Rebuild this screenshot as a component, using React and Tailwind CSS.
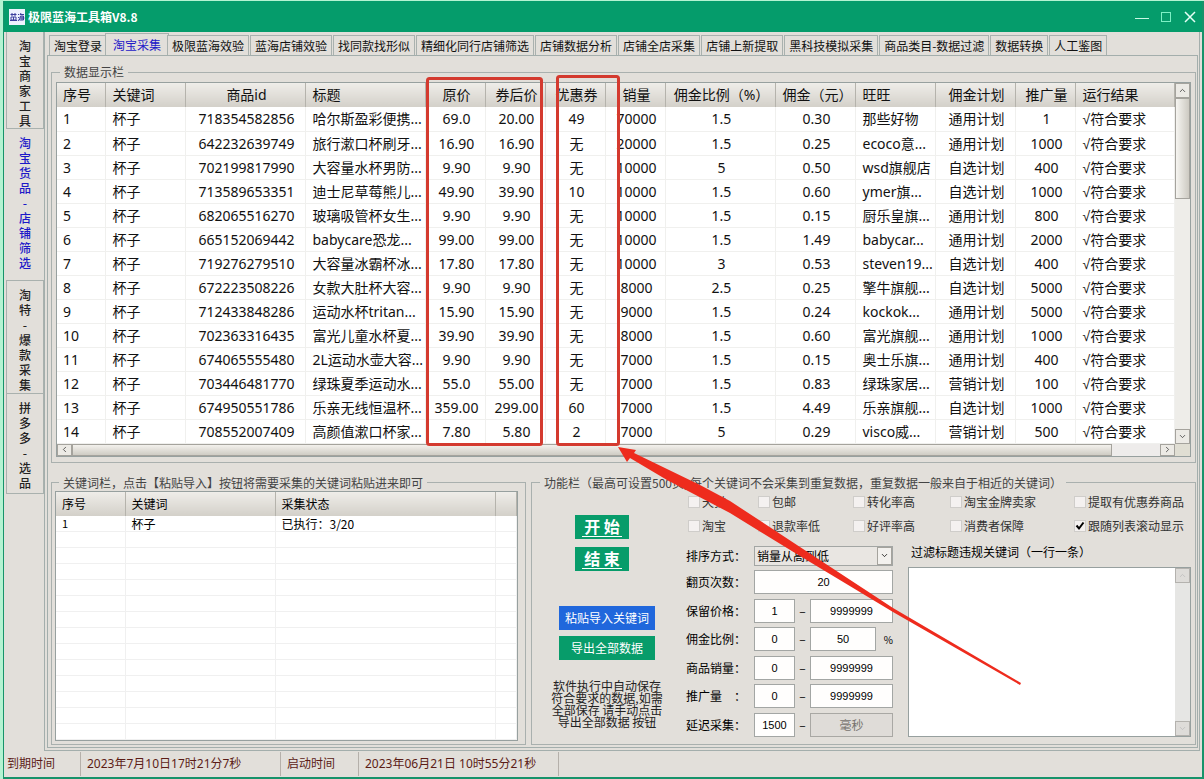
import { useState } from "react";
import { ChevronDown, ChevronLeft, ChevronRight, ChevronUp } from "lucide-react";

const sideTabs = [
  { name: "淘宝商家工具", size: "h-[97px]" },
  { name: "淘宝货品-店铺筛选", size: "h-[152px]" },
  { name: "淘特-爆款采集", size: "h-[113px]" },
  { name: "拼多多-选品", size: "h-[100px]" },
];

const topTabs = [
  "淘宝登录",
  "淘宝采集",
  "极限蓝海效验",
  "蓝海店铺效验",
  "找同款找形似",
  "精细化同行店铺筛选",
  "店铺数据分析",
  "店铺全店采集",
  "店铺上新提取",
  "黑科技模拟采集",
  "商品类目-数据过滤",
  "数据转换",
  "人工鉴图",
];

const columns = [
  { title: "序号", width: "w-12", align: "text-left" },
  { title: "关键词", width: "w-20", align: "text-left" },
  { title: "商品id", width: "w-[120px]", align: "text-center" },
  { title: "标题", width: "w-[120px]", align: "text-left" },
  { title: "原价", width: "w-15", align: "text-center" },
  { title: "券后价", width: "w-15", align: "text-center" },
  { title: "优惠券", width: "w-15", align: "text-center" },
  { title: "销量", width: "w-15", align: "text-center" },
  { title: "佣金比例（%）", width: "w-[110px]", align: "text-center" },
  { title: "佣金（元）", width: "w-20", align: "text-center" },
  { title: "旺旺", width: "w-20", align: "text-left" },
  { title: "佣金计划", width: "w-20", align: "text-center" },
  { title: "推广量", width: "w-15", align: "text-center" },
  { title: "运行结果", width: "", align: "text-left" },
];

const rows = [
  ["1", "杯子", "718354582856", "哈尔斯盈彩便携...", "69.0", "20.00", "49", "70000", "1.5", "0.30", "那些好物", "通用计划", "1", "√符合要求"],
  ["2", "杯子", "642232639749", "旅行漱口杯刷牙...", "16.90", "16.90", "无", "20000", "1.5", "0.25", "ecoco意...", "通用计划", "1000", "√符合要求"],
  ["3", "杯子", "702199817990", "大容量水杯男防...", "9.90", "9.90", "无", "10000", "5", "0.50", "wsd旗舰店", "自选计划", "400", "√符合要求"],
  ["4", "杯子", "713589653351", "迪士尼草莓熊儿...", "49.90", "39.90", "10", "10000", "1.5", "0.60", "ymer旗...", "自选计划", "1000", "√符合要求"],
  ["5", "杯子", "682065516270", "玻璃吸管杯女生...", "9.90", "9.90", "无", "10000", "1.5", "0.15", "厨乐皇旗...", "通用计划", "800", "√符合要求"],
  ["6", "杯子", "665152069442", "babycare恐龙...", "99.00", "99.00", "无", "10000", "1.5", "1.49", "babycar...", "通用计划", "2000", "√符合要求"],
  ["7", "杯子", "719276279510", "大容量冰霸杯冰...", "17.80", "17.80", "无", "10000", "3", "0.53", "steven19...", "自选计划", "400", "√符合要求"],
  ["8", "杯子", "672223508226", "女款大肚杯大容...", "9.90", "9.90", "无", "8000", "2.5", "0.25", "擎牛旗舰...", "自选计划", "5000", "√符合要求"],
  ["9", "杯子", "712433848286", "运动水杯tritan...", "15.90", "15.90", "无", "9000", "1.5", "0.24", "kockok...", "通用计划", "5000", "√符合要求"],
  ["10", "杯子", "702363316435", "富光儿童水杯夏...", "39.90", "39.90", "无", "8000", "1.5", "0.60", "富光旗舰...", "通用计划", "1000", "√符合要求"],
  ["11", "杯子", "674065555480", "2L运动水壶大容...", "9.90", "9.90", "无", "7000", "1.5", "0.15", "奥士乐旗...", "通用计划", "400", "√符合要求"],
  ["12", "杯子", "703446481770", "绿珠夏季运动水...", "55.0", "55.00", "无", "7000", "1.5", "0.83", "绿珠家居...", "营销计划", "100", "√符合要求"],
  ["13", "杯子", "674950551786", "乐亲无线恒温杯...", "359.00", "299.00", "60", "7000", "1.5", "4.49", "乐亲旗舰...", "自选计划", "1000", "√符合要求"],
  ["14", "杯子", "708552007409", "高颜值漱口杯家...", "7.80", "5.80", "2", "7000", "5", "0.29", "visco威...", "营销计划", "500", "√符合要求"],
];

const filters = [
  "天猫",
  "包邮",
  "转化率高",
  "淘宝金牌卖家",
  "提取有优惠券商品",
  "淘宝",
  "退款率低",
  "好评率高",
  "消费者保障",
  "跟随列表滚动显示",
];

const ranges = [
  { id: "price", label: "保留价格：", min: "1", max: "9999999" },
  { id: "rate", label: "佣金比例：", min: "0", max: "50", unit: "%" },
  { id: "sales", label: "商品销量：", min: "0", max: "9999999" },
  { id: "promo", label: "推广量　：", min: "0", max: "9999999" },
];

const headCell =
  "h-6 p-0 font-normal whitespace-nowrap border-r border-[#b5b3ac] bg-linear-to-b from-[#efede9] to-[#d3d0c9]";
const inputStyle =
  "h-6 min-w-0 border border-[#a3a6a4] bg-[#fffefd] text-center text-[11px] font-['Liberation_Sans',sans-serif] text-black outline-none";
const scrollButton =
  "flex shrink-0 items-center justify-center border border-[#a5a39d] bg-[#eceae5] text-[#333]";
const startStopButton =
  "flex h-6 w-[54px] items-center justify-center bg-[#079c6a] text-base font-bold text-white";

function TitleBar() {
  return (
    <header className="flex h-[31px] shrink-0 items-center bg-[#059c6b] pl-[5px] text-white">
      <svg className="mr-[3px] h-4 w-4" viewBox="0 0 16 16">
        <rect width="16" height="16" fill="#eef2ff" />
        <path
          d="M1.5 5.5h6M3 4v3M6 4v3M2 8v3h5V8zM4.500 8v3M1 11.500h7M9 5l1 1M9 8l1 1M9 12l1.500-2M11 5.500h4M12 4l-1 2M11.500 7h3v4h-4zM10.500 9h5M13 7v4"
          fill="none"
          stroke="#3c3f9e"
          strokeWidth="1"
        />
      </svg>
      <h1 className="flex-1 text-xs font-bold">极限蓝海工具箱V8.8</h1>
      <button aria-label="最小化" className="flex h-6 w-6 items-center justify-center">
        <svg className="h-4 w-4" viewBox="0 0 16 16" stroke="#c9f7e4" fill="none">
          <path d="M1 9.500h14" />
        </svg>
      </button>
      <button aria-label="最大化" className="flex h-6 w-6 items-center justify-center">
        <svg className="h-4 w-4" viewBox="0 0 16 16" stroke="#7df0c5" fill="none">
          <rect x="3.500" y="3.500" width="9" height="9" />
        </svg>
      </button>
      <button aria-label="关闭" className="flex h-6 w-6 items-center justify-center">
        <svg className="h-4 w-4" viewBox="0 0 16 16" stroke="#e6fff6" strokeWidth="1.500" fill="none">
          <path d="M3 3l10 10M13 3L3 13" />
        </svg>
      </button>
    </header>
  );
}

function DataTable() {
  return (
    <div className="border border-[#97a09f] bg-white">
      <div className="flex">
        <table className="w-full flex-1 table-fixed border-collapse text-sm/6 text-[#111] font-['Noto_Sans','Liberation_Sans','Noto_Sans_CJK_SC',sans-serif]">
          <thead>
            <tr>
              {columns.map((col) => (
                <th
                  key={col.title}
                  className={`${headCell} ${col.width} ${col.align} ${col.title === "序号" ? "pl-1.5" : "pl-[7px] pr-1"}`}
                >
                  {col.title}
                </th>
              ))}
            </tr>
          </thead>
          <tbody>
            {rows.map((row) => (
              <tr key={row[0]}>
                {row.map((cell, i) => (
                  <td
                    key={columns[i].title}
                    className={`h-6 whitespace-nowrap border-r border-b border-[#f0f0ee] py-0 leading-[23px] ${columns[i].align} ${i === 0 ? "pl-1.5" : "pl-[7px] pr-1"}`}
                  >
                    {cell}
                  </td>
                ))}
              </tr>
            ))}
          </tbody>
        </table>
        <div className="flex w-[15px] shrink-0 flex-col bg-[#eeede9]">
          <button aria-label="向上滚动" className={`${scrollButton} h-[15px]`}>
            <ChevronUp size={9} />
          </button>
          <div className="h-[101px] border border-[#a5a39d] bg-linear-to-r from-[#f6f5f1] to-[#cdcac2]" />
          <div className="flex-1" />
          <button aria-label="向下滚动" className={`${scrollButton} h-[15px]`}>
            <ChevronDown size={9} />
          </button>
        </div>
      </div>
      <div className="flex h-3 bg-[#eeeceb]">
        <button aria-label="向左滚动" className={`${scrollButton} w-[15px]`}>
          <ChevronLeft size={9} />
        </button>
        <div className="flex-1 border border-[#a5a39d] bg-linear-to-b from-[#f3f1ed] to-[#cfccc4]" />
        <div className="w-12" />
        <button aria-label="向右滚动" className={`${scrollButton} w-[15px]`}>
          <ChevronRight size={9} />
        </button>
        <div className="w-[15px] bg-[#e0ded3]" />
      </div>
    </div>
  );
}

function KeywordTable() {
  const blankRows = Array.from({ length: 13 });
  const cell = "h-4 border-r border-b border-[#f0f0f0] py-0 pl-1.5";
  return (
    <div className="h-full border border-[#97a09f] bg-white">
      <table className="w-full table-fixed border-collapse text-xs/[15px] text-black">
        <thead>
          <tr>
            <th className={`${headCell} w-[69px] pl-1.5 text-left`}>序号</th>
            <th className={`${headCell} w-[150px] pl-1.5 text-left`}>关键词</th>
            <th className={`${headCell} w-[220px] pl-1.5 text-left`}>采集状态</th>
            <th className={headCell} />
          </tr>
        </thead>
        <tbody>
          <tr>
            <td className={`${cell} text-[11px]`}>1</td>
            <td className={cell}>杯子</td>
            <td className={cell}>已执行：3/20</td>
            <td className={cell} />
          </tr>
          {blankRows.map((_, i) => (
            <tr key={i}>
              <td className={cell} />
              <td className={cell} />
              <td className={cell} />
              <td className={cell} />
            </tr>
          ))}
        </tbody>
      </table>
    </div>
  );
}

function FilterBox({ label, checked, onChange }) {
  return (
    <label className="flex h-4 items-center gap-0.5 whitespace-nowrap text-[#333]">
      <span className="relative flex h-3 w-3">
        <input
          type="checkbox"
          checked={checked}
          onChange={onChange}
          className="peer h-3 w-3 appearance-none border border-[#cfcdca] bg-[#f4f1f0]"
        />
        <svg
          className="pointer-events-none absolute inset-0 hidden h-3 w-3 peer-checked:block"
          viewBox="0 0 12 12"
          fill="none"
          stroke="#000"
          strokeWidth="2"
        >
          <path d="M2.500 5.500l2.500 3 4.500-6" />
        </svg>
      </span>
      {label}
    </label>
  );
}

function Settings() {
  const [checked, setChecked] = useState({ 跟随列表滚动显示: true });
  const [banned, setBanned] = useState("");

  const toggle = (name) => {
    setChecked({ ...checked, [name]: !checked[name] });
  };

  return (
    <div className="flex h-full text-black">
      {/* Action buttons */}
      <div className="flex w-[150px] shrink-0 flex-col items-center pt-6">
        <div className="flex flex-col gap-2 pr-2.5">
          <button className={startStopButton}>
            <span className="border-b border-white px-0.5 leading-5">开 始</span>
          </button>
          <button className={startStopButton}>
            <span className="border-b border-white px-0.5 leading-5">结 束</span>
          </button>
        </div>
        <button className="mt-[35px] h-6 w-24 bg-[#2067dc] text-white">粘贴导入关键词</button>
        <button className="mt-1.5 h-6 w-24 bg-[#079c6a] text-white">导出全部数据</button>
        <p className="mt-5 text-center leading-3 whitespace-nowrap text-[#222]">
          软件执行中自动保存
          <br />
          符合要求的数据,如需
          <br />
          全部保存 请手动点击
          <br />
          导出全部数据 按钮
        </p>
      </div>

      <div className="flex min-w-0 flex-1 flex-col pt-[3px] pr-1 pl-1">
        <div className="grid grid-cols-[70px_95px_97px_124px_1fr] gap-y-2 pl-0.5">
          {filters.map((name) => (
            <FilterBox key={name} label={name} checked={!!checked[name]} onChange={() => toggle(name)} />
          ))}
        </div>

        <div className="mt-3 flex flex-1 gap-[15px]">
          <div className="flex w-[207px] shrink-0 flex-col justify-between">
            <div className="flex items-center">
              <label htmlFor="sort" className="w-[68px]">
                排序方式：
              </label>
              <div className="relative flex-1">
                <select
                  id="sort"
                  className="block h-5 w-full appearance-none border border-[#a3a6a4] bg-[#e9e6e2] pl-0.5 text-xs text-black outline-none"
                >
                  <option>销量从高到低</option>
                </select>
                <span className="pointer-events-none absolute inset-y-px right-px flex w-[15px] items-center justify-center border border-[#a5a39d] bg-[#f3f1ee]">
                  <ChevronDown size={9} />
                </span>
              </div>
            </div>
            <div className="flex items-center">
              <label htmlFor="pages" className="w-[68px]">
                翻页次数：
              </label>
              <input id="pages" defaultValue="20" className={`${inputStyle} flex-1`} />
            </div>
            {ranges.map((r) => (
              <div key={r.id} className="flex items-center">
                <label htmlFor={r.id} className="w-[68px]">
                  {r.label}
                </label>
                <input id={r.id} defaultValue={r.min} className={`${inputStyle} w-[41px]`} />
                <span className="w-[15px] text-center">–</span>
                <input aria-label={`${r.label}上限`} defaultValue={r.max} className={`${inputStyle} flex-1`} />
                {r.unit && <span className="w-[17px] text-right text-[10px]">{r.unit}</span>}
              </div>
            ))}
            <div className="flex items-center">
              <label htmlFor="delay" className="w-[68px]">
                延迟采集：
              </label>
              <input id="delay" defaultValue="1500" className={`${inputStyle} w-[41px]`} />
              <span className="w-[15px] text-center">–</span>
              <button disabled className="h-6 flex-1 border border-[#a9a8a4] bg-[#dfdcd8] text-[#77736f]">
                毫秒
              </button>
            </div>
          </div>

          <div className="flex min-w-0 flex-1 flex-col">
            <label htmlFor="banned" className="h-[21px] pl-[3px] leading-3">
              过滤标题违规关键词（一行一条）
            </label>
            <div className="flex flex-1 border border-[#97a09f] bg-white">
              <textarea
                id="banned"
                value={banned}
                onChange={(e) => setBanned(e.target.value)}
                className="min-w-0 flex-1 resize-none outline-none"
              />
              <div className="flex w-[15px] flex-col justify-between bg-[#e6e6e4]">
                <span className="flex h-[15px] items-center justify-center border border-[#b4b2ae] bg-[#dedcd9] text-[#bbb]">
                  <ChevronUp size={9} />
                </span>
                <span className="flex h-[15px] items-center justify-center border border-[#b4b2ae] bg-[#dedcd9] text-[#bbb]">
                  <ChevronDown size={9} />
                </span>
              </div>
            </div>
          </div>
        </div>
      </div>
    </div>
  );
}

function StatusBar() {
  const item = "border-r border-[#b5b0aa] py-1 pl-1.5";
  return (
    <footer className="flex h-[26px] shrink-0 items-center text-xs/4 whitespace-nowrap text-[#5c1c16] font-['Noto_Sans','Noto_Sans_CJK_SC',sans-serif]">
      <span className="w-[77px] border-r border-[#b5b0aa] py-1 pl-[3px]">到期时间</span>
      <span className={`${item} w-[200px]`}>2023年7月10日17时21分7秒</span>
      <span className={`${item} w-[78px]`}>启动时间</span>
      <span className={`${item} w-[200px]`}>2023年06月21日 10时55分21秒</span>
    </footer>
  );
}

// Red boxes and arrow drawn over the price and coupon columns
function Annotations() {
  return (
    <svg
      className="pointer-events-none absolute top-0 left-0 h-[779px] w-[1204px]"
      viewBox="0 0 1204 779"
      fill="none"
      stroke="#d43a2f"
      strokeWidth="3"
    >
      <rect x="427.500" y="78.500" width="114" height="366" rx="2" />
      <rect x="557.500" y="76.500" width="61" height="368" rx="2" />
      <path
        d="M618 447L636 450L634 453L700 485L730 501L800 547L893 608L1021 683L1020 685L893 612L800 556L730 513L667 480L630 458L627 462Z"
        fill="#ee2b1d"
        stroke="none"
      />
    </svg>
  );
}

export default function App() {
  const [activeSide, setActiveSide] = useState(1);
  const [activeTop, setActiveTop] = useState(1);

  return (
    <div className="relative flex min-h-screen flex-col overflow-hidden bg-[#b4f3d2] pt-px pl-[3px] text-xs font-['Noto_Sans_CJK_SC',sans-serif]">
      <div className="flex flex-1 flex-col border-r-2 border-b-2 border-l border-[#17936a] bg-[#e2dfda]">
        <TitleBar />
        <div className="flex flex-1">
          {/* Side tabs */}
          <nav className="w-10 shrink-0 pl-0.5">
            {sideTabs.map((tab, i) => (
              <button
                key={tab.name}
                onClick={() => setActiveSide(i)}
                className={`flex w-full flex-col items-center border-b border-[#a9b1ae] pt-1.5 leading-[15px] font-medium ${tab.size} ${
                  i === activeSide ? "text-[#1c18c8]" : "border-r border-l text-[#222]"
                }`}
              >
                {[...tab.name].map((char, n) => (
                  <span key={n}>{char}</span>
                ))}
              </button>
            ))}
          </nav>

          <div className="mr-0.5 flex min-w-0 flex-1 flex-col border-r border-b border-l border-[#a3aeac] pr-px pb-0.5 pl-0.5">
            <div className="flex h-[23px] shrink-0 items-end gap-px pl-0.5">
              {topTabs.map((name, i) => (
                <button
                  key={name}
                  onClick={() => setActiveTop(i)}
                  className={
                    i === activeTop
                      ? "-mx-[3px] h-[22px] border border-b-0 border-[#a9b1ae] bg-[#e2dfda] px-[7px] whitespace-nowrap text-[#1c18c8]"
                      : "h-5 border border-b-0 border-[#a9b1ae] bg-[#e2dfda] px-1 whitespace-nowrap text-[#111]"
                  }
                >
                  {name}
                </button>
              ))}
            </div>

            <main className="flex flex-1 flex-col border border-[#a3aeac] pt-2 pr-px pb-0.5 pl-[3px]">
              <fieldset className="min-w-0 border border-[#a9b0ae] px-1 pb-[5px]">
                <legend className="ml-1 px-1 leading-4 text-[#444]">数据显示栏</legend>
                <div className="pt-0.5">
                  <DataTable />
                </div>
              </fieldset>

              <div className="mt-3 grid flex-1 grid-cols-[5fr_7fr] gap-[5px]">
                <fieldset className="min-w-0 border border-[#a9b0ae] pr-[7px] pb-[3px] pl-[3px]">
                  <legend className="ml-1 px-1 leading-4 whitespace-nowrap text-[#444]">
                    关键词栏，点击【粘贴导入】按钮将需要采集的关键词粘贴进来即可
                  </legend>
                  <KeywordTable />
                </fieldset>
                <fieldset className="min-w-0 border border-[#a9b0ae] pb-[7px]">
                  <legend className="ml-2 px-1 leading-4 whitespace-nowrap text-[#444]">
                    功能栏（最高可设置500页, 每个关键词不会采集到重复数据，重复数据一般来自于相近的关键词）
                  </legend>
                  <Settings />
                </fieldset>
              </div>
            </main>
          </div>
        </div>
        <StatusBar />
      </div>
      <Annotations />
    </div>
  );
}
